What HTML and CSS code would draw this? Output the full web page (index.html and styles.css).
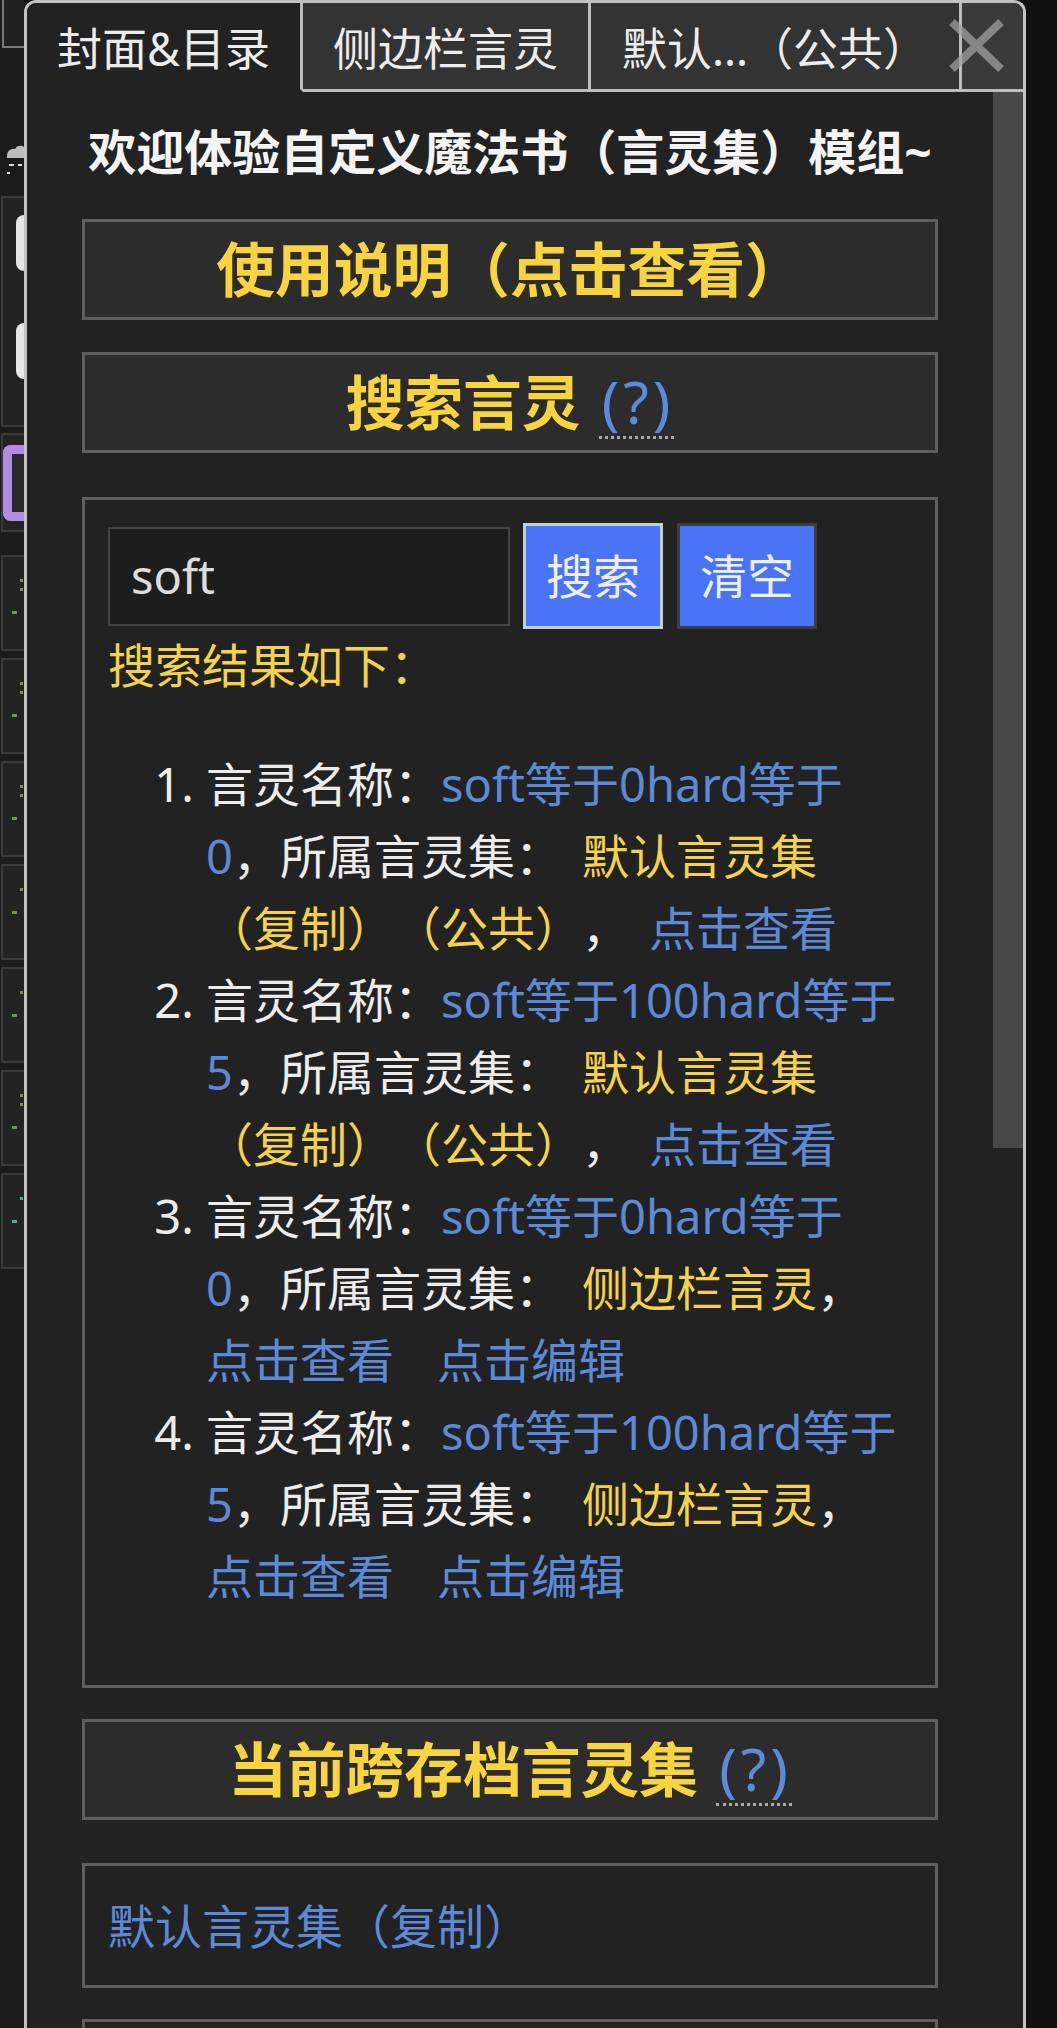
FILE: index.html
```html
<!DOCTYPE html>
<html lang="zh-CN">
<head>
<meta charset="utf-8">
<title>言灵集</title>
<link rel="stylesheet" href="styles.css">
</head>
<body>
<div class="page">
  <div class="strip">
    <div class="s-top"></div>
    <div class="s-cloud">
      <svg width="19" height="42" viewBox="0 0 19 42"><path d="M2 14 C2 9 6 6 10 7 C12 3 17 3 19 5 L19 16 L2 16 Z" fill="#bdbdbd"/><rect x="4" y="22" width="5" height="2" fill="#ddd"/><rect x="13" y="22" width="4" height="2" fill="#ddd"/><rect x="2" y="30" width="3" height="2" fill="#ddd"/></svg>
    </div>
    <div class="s-box s-tall"><span class="knob"></span><span class="knob"></span></div>
    <div class="s-box s-purple"><span class="purple"></span></div>
    <div class="s-box s-row"><span class="dot"></span><span class="dot"></span><span class="dot low"></span></div>
    <div class="s-box s-row"><span class="dot"></span><span class="dot"></span><span class="dot low"></span></div>
    <div class="s-box s-row"><span class="dot"></span><span class="dot"></span><span class="dot low"></span></div>
    <div class="s-box s-row"><span class="dot"></span><span class="dot low"></span></div>
    <div class="s-box s-row"><span class="dot"></span><span class="dot low"></span></div>
    <div class="s-box s-row"><span class="dot"></span><span class="dot"></span><span class="dot low"></span></div>
    <div class="s-box s-row"><span class="dot teal"></span><span class="dot teal low"></span></div>
  </div>

  <div class="panel">
    <div class="tabs">
      <div class="tab tab-cover active">封面&amp;目录</div>
      <div class="tab tab-side">侧边栏言灵</div>
      <div class="tab tab-default">默认...（公共）</div>
      <div class="tab tab-close">
        <svg class="close-x" width="57" height="55" viewBox="0 0 57 55"><path d="M4 4 L53 51 M53 4 L4 51" stroke="#a0a0a0" stroke-opacity="0.75" stroke-width="8" fill="none"/></svg>
      </div>
    </div>
    <div class="main">
      <div class="content">
        <div class="title">欢迎体验自定义魔法书（言灵集）模组~</div>

        <div class="hbox hbox-first">使用说明（点击查看）</div>
        <div class="hbox">搜索言灵<abbr class="help">(?)</abbr></div>

        <div class="cbox search-box">
          <div class="search-row">
            <input class="search-input" type="text" value="soft">
            <button class="btn btn-search">搜索</button>
            <button class="btn btn-clear">清空</button>
          </div>
          <div class="result-label">搜索结果如下：</div>
          <ol class="results">
            <li>言灵名称：<a class="link">soft等于0hard等于0</a>，所属言灵集：<span class="set">默认言灵集（复制）（公共）</span><span class="sep">，</span><a class="link">点击查看</a></li>
            <li>言灵名称：<a class="link">soft等于100hard等于5</a>，所属言灵集：<span class="set">默认言灵集（复制）（公共）</span><span class="sep">，</span><a class="link">点击查看</a></li>
            <li>言灵名称：<a class="link">soft等于0hard等于0</a>，所属言灵集：<span class="set">侧边栏言灵</span><span class="sep">，</span><a class="link">点击查看</a><a class="link link-edit">点击编辑</a></li>
            <li>言灵名称：<a class="link">soft等于100hard等于5</a>，所属言灵集：<span class="set">侧边栏言灵</span><span class="sep">，</span><a class="link">点击查看</a><a class="link link-edit">点击编辑</a></li>
          </ol>
        </div>

        <div class="hbox hbox-after">当前跨存档言灵集<abbr class="help">(?)</abbr></div>

        <div class="cbox set-box"><a class="link">默认言灵集（复制）</a></div>

        <div class="cbox set-box next-box"></div>
      </div>
      <div class="scrolltrack"><div class="thumb"></div></div>
    </div>
  </div>

  <div class="outside"></div>
</div>
</body>
</html>
```

FILE: styles.css
```css
* {
  box-sizing: border-box;
}

html,
body {
  margin: 0;
  padding: 0;
}

body {
  background: #111111;
  font-family: "Noto Sans", "Noto Sans CJK SC", sans-serif;
  text-spacing-trim: space-all;
}

.page {
  display: flex;
  height: 2028px;
  overflow: hidden;
}

/* ---------- background strip on the left ---------- */
.strip {
  width: 24px;
  flex: none;
  background: #1b1b1b;
  display: flex;
  flex-direction: column;
}

.s-top {
  height: 48px;
  margin-left: 2px;
  border-left: 2px solid #7a7a7a;
  border-bottom: 2px solid #7a7a7a;
  background: #202020;
}

.s-cloud {
  margin-top: 94px;
  height: 42px;
  padding-left: 5px;
}

.s-cloud svg {
  display: block;
}

.s-box {
  border: 2px solid #3a3a3a;
  border-right: none;
  background: #232323;
  margin-left: 1px;
  display: flex;
  flex-direction: column;
  align-items: flex-end;
}

.s-tall {
  margin-top: 12px;
  height: 231px;
  padding-top: 17px;
  gap: 52px;
}

.knob {
  width: 8px;
  height: 56px;
  border-radius: 28px 0 0 28px;
  background: #e6e6e6;
}

.s-purple {
  margin-top: 6px;
  height: 99px;
  padding-top: 10px;
}

.purple {
  width: 21px;
  height: 76px;
  border: 9px solid #b08de2;
  border-right: none;
  border-radius: 8px 0 0 8px;
  background: #2a2a2a;
}

.s-row {
  margin-top: 7px;
  height: 96px;
  padding-top: 22px;
  padding-right: 1px;
  gap: 6px;
}

.s-purple + .s-row {
  margin-top: 23px;
}

.dot {
  width: 3px;
  height: 3px;
  background: #6f9a4c;
}

.dot.low {
  margin-top: 14px;
  margin-right: 6px;
  width: 5px;
}

.dot.teal {
  background: #4fa6a0;
}

/* ---------- panel ---------- */
.panel {
  width: 1002px;
  flex: none;
  border: 3px solid #c2c2c2;
  border-bottom: none;
  border-radius: 12px 12px 0 0;
  background: #222222;
  overflow: hidden;
  display: flex;
  flex-direction: column;
}

.outside {
  flex: 1;
  background: #111111;
}

.tabs {
  display: flex;
  height: 89px;
  flex: none;
}

.tab {
  display: flex;
  align-items: center;
  justify-content: center;
  flex: none;
  font-size: 45px;
  color: #ececec;
  background: #333333;
  border-right: 3px solid #bdbdbd;
  border-bottom: 3px solid #bdbdbd;
  white-space: nowrap;
}

.tab.active {
  background: #222222;
  border-bottom-color: transparent;
}

.tab-cover {
  width: 276px;
}

.tab-side {
  width: 288px;
}

.tab-default {
  width: 371px;
}

.tab-close {
  flex: 1;
  border-right: none;
  background: #3a3a3a;
  justify-content: flex-start;
  align-items: flex-start;
}

.close-x {
  display: block;
  flex: none;
  margin-left: -14px;
  margin-top: 15px;
}

.main {
  flex: 1;
  display: flex;
}

.content {
  flex: 1;
  min-width: 0;
  padding: 0 55px;
  font-size: 47px;
  line-height: 72px;
  color: #ececec;
}

.scrolltrack {
  width: 30px;
  flex: none;
}

.thumb {
  height: 1056px;
  background: #484848;
}

.title {
  margin-top: 24px;
  text-align: center;
  font-size: 48px;
  font-weight: bold;
  color: #f4f4f4;
}

/* heading boxes */
.hbox {
  height: 101px;
  margin-top: 32px;
  border: 3px solid #5f5f5f;
  background: #2c2c2c;
  display: flex;
  align-items: center;
  justify-content: center;
  font-size: 58.75px;
  line-height: 1.2;
  font-weight: bold;
  color: #f8d43e;
  white-space: nowrap;
}

.hbox-first {
  margin-top: 31px;
}

.hbox-after {
  margin-top: 31px;
}

.help {
  font-weight: normal;
  color: #5d8bdc;
  text-decoration: none;
  letter-spacing: 4px;
  padding-left: 3px;
  border-bottom: 3px dotted #a9a9a9;
  margin-left: 18px;
}

/* content boxes */
.cbox {
  border: 3px solid #5f5f5f;
  background: #222222;
}

.search-box {
  margin-top: 44px;
  padding: 23px 27px 26px 23px;
}

.search-row {
  display: flex;
  align-items: center;
  gap: 13px;
}

.search-input {
  width: 402px;
  height: 99px;
  border: 2px solid #444444;
  background: #1d1d1d;
  color: #dddddd;
  font: inherit;
  font-size: 47px;
  padding: 0 21px;
  outline: none;
}

.btn {
  width: 140px;
  height: 106px;
  padding: 0;
  border: 3px solid #c9cdd8;
  background: #4a73f5;
  color: #eef0ff;
  font: inherit;
  font-size: 47px;
  line-height: 1;
}

.btn-clear {
  margin-left: 1px;
  border-color: #393d4a;
}

.result-label {
  color: #f3d34a;
}

.results {
  margin: 47px 0;
  padding-left: 98px;
}

.link {
  color: #5d8ad8;
}

.set {
  color: #f3d34a;
  margin-left: 20px;
}

.sep {
  margin-right: 20px;
}

.link-edit {
  margin-left: 43px;
}

.set-box {
  margin-top: 43px;
  padding: 24px 23px;
  height: 125px;
}

.next-box {
  margin-top: 31px;
  height: 120px;
}
```
